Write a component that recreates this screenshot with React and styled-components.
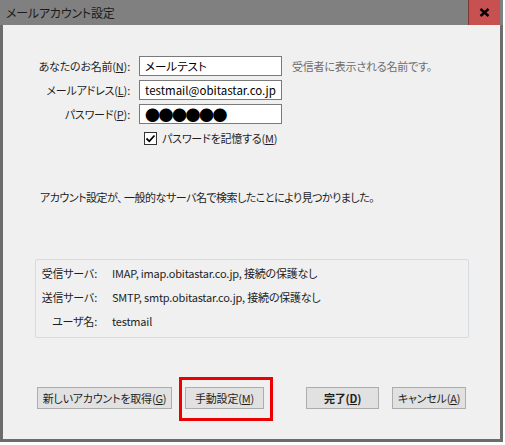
import React from "react";
import styled, { createGlobalStyle } from "styled-components";

const Global = createGlobalStyle`
  body {
    margin: 0;
    background: #ffffff;
    font-family: "Noto Sans CJK JP", "Noto Sans", sans-serif;
    font-size: 11px;
    letter-spacing: -0.2px;
    font-feature-settings: "palt";
    color: #1e1e1e;
  }
`;

const Window = styled.div`
  width: 503px;
  height: 442px;
  box-sizing: border-box;
  border: 3px solid #6c6c6c;
  border-top: none;
  display: flex;
  flex-direction: column;
  background: #f0f0f0;
`;

const TitleBar = styled.div`
  height: 25px;
  margin: 0 -3px 0 -3px;
  padding-right: 3px;
  background: #808080;
  display: flex;
  align-items: center;
  justify-content: space-between;
`;

const Title = styled.div`
  padding-left: 6px;
  font-size: 12px;
  color: #1b1b1b;
`;

const CloseBtn = styled.div`
  width: 32px;
  height: 25px;
  box-sizing: border-box;
  background: #c75050;
  border-left: 1px solid #7a3a3a;
  display: flex;
  align-items: center;
  justify-content: center;
`;

const Body = styled.div`
  flex: 1;
  padding: 31px 31px 0 32px;
  display: flex;
  flex-direction: column;
`;

const Form = styled.div`
  display: grid;
  grid-template-columns: 93px 143px auto;
  column-gap: 9px;
  row-gap: 4px;
  padding-left: 2px;
  align-items: center;
`;

const Label = styled.div`
  text-align: right;
  white-space: nowrap;
`;

const Input = styled.div`
  height: 20px;
  box-sizing: border-box;
  border: 1px solid #7a7a7a;
  background: #ffffff;
  padding-left: 5px;
  display: flex;
  align-items: center;
  white-space: nowrap;
  overflow: hidden;
  font-size: ${(p) => (p.$dots ? "15px" : "11.5px")};
  letter-spacing: ${(p) => (p.$dots ? "-1.5px" : "0")};
  color: #000;
`;

const Hint = styled.div`
  color: #6d6d6d;
  padding-left: 1px;
  white-space: nowrap;
`;

const CheckRow = styled.label`
  grid-column: 2 / 4;
  height: 20px;
  display: flex;
  align-items: center;
  gap: 5px;
  padding-left: 5px;
`;

const Box = styled.span`
  width: 13px;
  height: 13px;
  box-sizing: border-box;
  border: 1px solid #333;
  background: #fff;
  display: flex;
  align-items: center;
  justify-content: center;
`;

const Message = styled.div`
  margin-top: 41px;
  padding-left: 5px;
  line-height: 16px;
  white-space: nowrap;
  letter-spacing: -0.5px;
`;

const InfoBox = styled.div`
  margin-top: 54px;
  width: 434px;
  height: 79px;
  box-sizing: border-box;
  border: 1px solid #d6dbe2;
  border-radius: 2px;
  padding-top: 1px;
  display: grid;
  grid-template-columns: 61px auto;
  grid-auto-rows: 24px;
  column-gap: 15px;
  align-items: center;
  white-space: nowrap;
`;

const InfoLabel = styled.div`
  text-align: right;
`;

const Buttons = styled.div`
  margin-top: 49px;
  padding-left: 2px;
  display: flex;
  align-items: center;
`;

const Button = styled.button`
  width: ${(p) => p.$w}px;
  height: 22px;
  margin-left: ${(p) => p.$ml || 0}px;
  box-sizing: border-box;
  border: 1px solid #adadad;
  background: #e1e1e1;
  font-family: inherit;
  font-size: 11px;
  letter-spacing: -0.2px;
  font-feature-settings: "palt";
  font-weight: ${(p) => (p.$bold ? 700 : 400)};
  color: #1e1e1e;
  padding: 0;
  white-space: nowrap;
`;

const Highlight = styled.span`
  position: relative;
  display: inline-flex;
  margin-left: 13px;
  &::after {
    content: "";
    position: absolute;
    left: -6px;
    right: -9px;
    top: -10px;
    bottom: -12px;
    border: 3px solid #ee0000;
    pointer-events: none;
  }
`;

const Check = () => (
  <svg width="11" height="11" viewBox="0 0 11 11">
    <path d="M1.5 5.5 L4.3 8.3 L9.5 2.5" fill="none" stroke="#000" strokeWidth="1.8" />
  </svg>
);

const CloseIcon = () => (
  <svg width="11" height="9" viewBox="0 0 11 9">
    <path d="M1.5 1 L9.5 8 M9.5 1 L1.5 8" stroke="#000" strokeWidth="2.4" />
  </svg>
);

export default function App() {
  return (
    <>
      <Global />
      <Window>
        <TitleBar>
          <Title>メールアカウント設定</Title>
          <CloseBtn>
            <CloseIcon />
          </CloseBtn>
        </TitleBar>
        <Body>
          <Form>
            <Label>
              あなたのお名前(<u>N</u>):
            </Label>
            <Input>メールテスト</Input>
            <Hint>受信者に表示される名前です。</Hint>
            <Label>
              メールアドレス(<u>L</u>):
            </Label>
            <Input>testmail@obitastar.co.jp</Input>
            <span />
            <Label>
              パスワード(<u>P</u>):
            </Label>
            <Input $dots>●●●●●●</Input>
            <span />
            <span />
            <CheckRow>
              <Box>
                <Check />
              </Box>
              <span>
                パスワードを記憶する(<u>M</u>)
              </span>
            </CheckRow>
          </Form>
          <Message>アカウント設定が、 一般的なサーバ名で検索したことにより見つかりました。</Message>
          <InfoBox>
            <InfoLabel>受信サーバ:</InfoLabel>
            <div>IMAP, imap.obitastar.co.jp, 接続の保護なし</div>
            <InfoLabel>送信サーバ:</InfoLabel>
            <div>SMTP, smtp.obitastar.co.jp, 接続の保護なし</div>
            <InfoLabel>ユーザ名:</InfoLabel>
            <div>testmail</div>
          </InfoBox>
          <Buttons>
            <Button $w={135}>
              新しいアカウントを取得(<u>G</u>)
            </Button>
            <Highlight>
              <Button $w={79}>
                手動設定(<u>M</u>)
              </Button>
            </Highlight>
            <Button $w={73} $ml={42} $bold>
              完了(<u>D</u>)
            </Button>
            <Button $w={74} $ml={13}>
              キャンセル(<u>A</u>)
            </Button>
          </Buttons>
        </Body>
      </Window>
    </>
  );
}
